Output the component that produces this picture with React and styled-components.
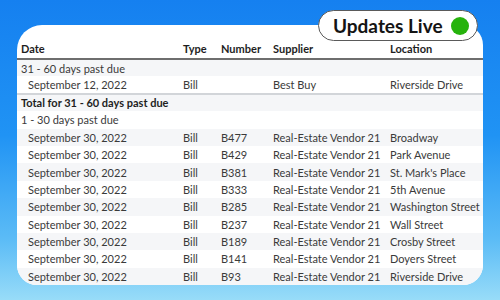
import React from 'react'
import { styled, createGlobalStyle } from 'styled-components'

const GlobalStyle = createGlobalStyle`
  html, body {
    margin: 0;
    padding: 0;
  }
  body {
    font-family: Lato, "Noto Sans", sans-serif;
  }
`;

const columns = [
  { label: "Date", width: 162 },
  { label: "Type", width: 38 },
  { label: "Number", width: 52 },
  { label: "Supplier", width: 117 },
  { label: "Location", width: 97 },
];

const streets = [
  ["B477", "Broadway"],
  ["B429", "Park Avenue"],
  ["B381", "St. Mark's Place"],
  ["B333", "5th Avenue"],
  ["B285", "Washington Street"],
  ["B237", "Wall Street"],
  ["B189", "Crosby Street"],
  ["B141", "Doyers Street"],
  ["B93", "Riverside Drive"],
];

const Stage = styled.div`
  width: 500px;
  height: 300px;
  box-sizing: border-box;
  padding: 25px 17px 0 17px;
  background: linear-gradient(180deg, #1580f0 0%, #2093f4 45%, #5cbcf6 80%, #98dcf8 100%);
  overflow: hidden;
`;

const CardWrap = styled.div`
  position: relative;
  width: 466px;
`;

const Card = styled.div`
  background: #ffffff;
  border-radius: 25px 20px 20px 20px;
  overflow: hidden;
`;

const Badge = styled.div`
  position: absolute;
  top: -15px;
  right: 5px;
  width: 160px;
  height: 31px;
  box-sizing: border-box;
  display: flex;
  align-items: center;
  justify-content: space-between;
  padding: 0 8px 0 14px;
  background: #ffffff;
  border: 1.5px solid #5a5a5a;
  border-radius: 16px;
  font-size: 19px;
  font-weight: 700;
  color: #141414;
`;

const Dot = styled.span`
  width: 18px;
  height: 18px;
  border-radius: 50%;
  background: #26b30c;
`;

const Table = styled.table`
  width: 466px;
  border-collapse: collapse;
  table-layout: fixed;
  font-size: 11px;
  color: #3a3a3a;
`;

const HeadCell = styled.th`
  height: 34px;
  box-sizing: border-box;
  padding: 0 0 3px 4px;
  vertical-align: bottom;
  text-align: left;
  font-weight: 700;
  color: #1e1e1e;
  border-bottom: 2px solid #6e6e6e;
`;

const Row = styled.tr`
  height: 17.4px;
  background: ${(p) => (p.$striped ? "#f5f6f8" : "#ffffff")};
  border-bottom: ${(p) => (p.$divider ? "2px solid #d2d5d9" : "none")};
`;

const Cell = styled.td`
  padding: 0 0 0 ${(p) => (p.$indent ? "11px" : "4px")};
  white-space: nowrap;
  overflow: hidden;
  font-weight: ${(p) => (p.$bold ? 700 : 400)};
  color: ${(p) => (p.$bold ? "#1e1e1e" : "#3a3a3a")};
`;

const GroupRow = ({ striped, bold, children, divider }) => (
  <Row $striped={striped} $divider={divider}>
    <Cell colSpan={5} $bold={bold}>{children}</Cell>
  </Row>
);

const BillRow = ({ striped, date, number, supplier, location, divider }) => (
  <Row $striped={striped} $divider={divider}>
    <Cell $indent>{date}</Cell>
    <Cell>Bill</Cell>
    <Cell>{number}</Cell>
    <Cell>{supplier}</Cell>
    <Cell>{location}</Cell>
  </Row>
);

export default function App() {
  return (
    <Stage>
      <GlobalStyle />
      <CardWrap>
        <Card>
          <Table>
            <colgroup>
              {columns.map((c) => (
                <col key={c.label} style={{ width: c.width }} />
              ))}
            </colgroup>
            <thead>
              <tr>
                {columns.map((c) => (
                  <HeadCell key={c.label}>{c.label}</HeadCell>
                ))}
              </tr>
            </thead>
            <tbody>
              <GroupRow striped>31 - 60 days past due</GroupRow>
              <BillRow
                date="September 12, 2022"
                number=""
                supplier="Best Buy"
                location="Riverside Drive"
                divider
              />
              <GroupRow striped bold>Total for 31 - 60 days past due</GroupRow>
              <GroupRow>1 - 30 days past due</GroupRow>
              {streets.map(([num, loc], i) => (
                <BillRow
                  key={num}
                  striped={i % 2 === 0}
                  date="September 30, 2022"
                  number={num}
                  supplier="Real-Estate Vendor 21"
                  location={loc}
                />
              ))}
            </tbody>
          </Table>
        </Card>
        <Badge>
          Updates Live
          <Dot />
        </Badge>
      </CardWrap>
    </Stage>
  )
}
